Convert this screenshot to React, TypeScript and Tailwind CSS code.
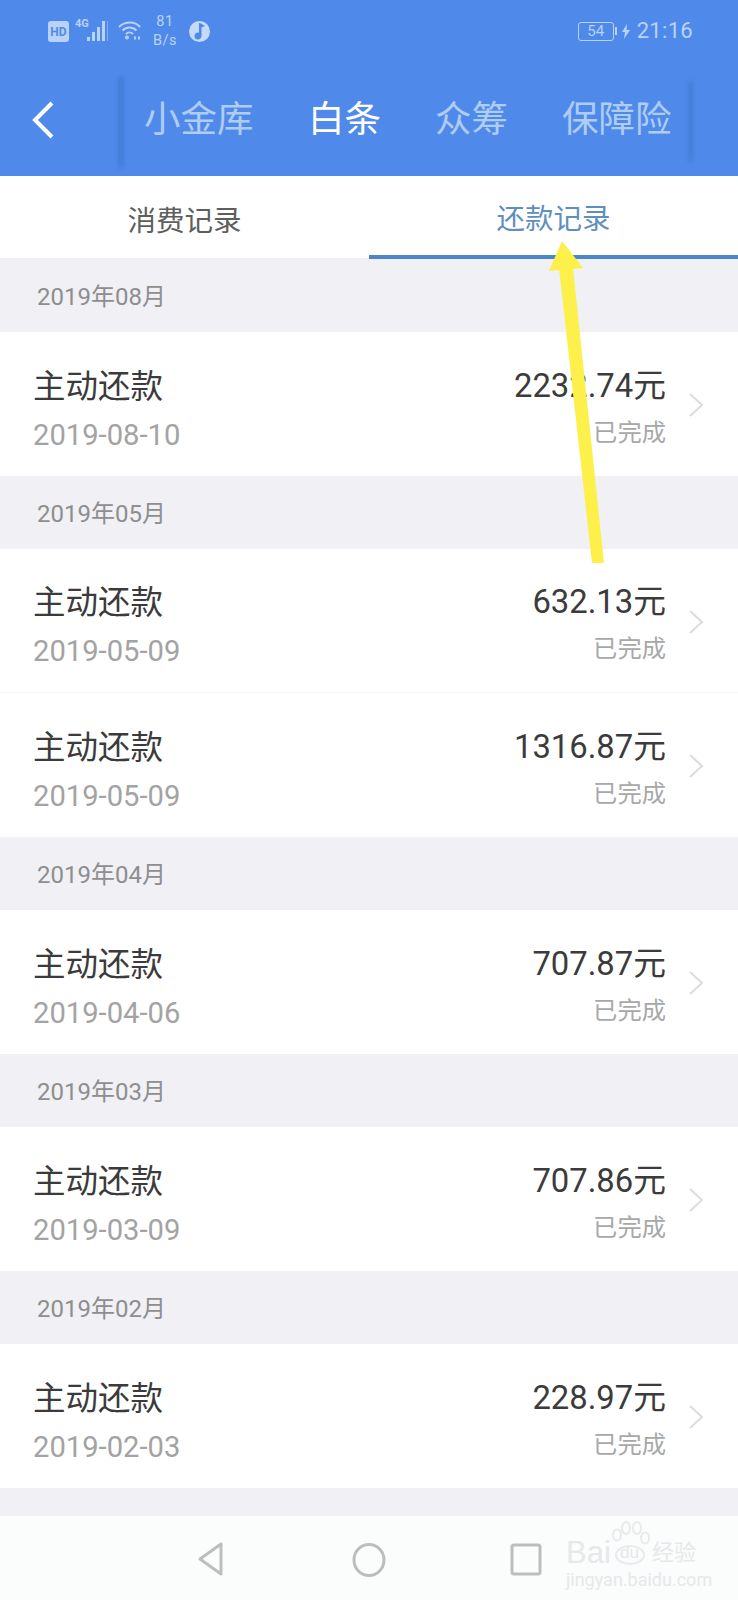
const font = { fontFamily: '"Roboto","Noto Sans CJK SC",sans-serif' };

function Row({ date, amount, divider }: { date: string; amount: string; divider?: boolean }) {
  return (
    <div className={divider ? "h-[144px] bg-white flex items-center pl-[33px] pr-[34px] border-b border-[#f7f7f7]" : "h-[144px] bg-white flex items-center pl-[33px] pr-[34px]"}>
      <div className="flex-1 flex flex-col">
        <div className="text-[32.5px] leading-[40px] text-[#3b3b3b] mt-[11px]">主动还款</div>
        <div className="text-[29.2px] leading-[36px] text-[#a3a3a3] mt-[10px]">{date}</div>
      </div>
      <div className="flex flex-col items-end mr-[22px]">
        <div className="text-[32.8px] leading-[40px] text-[#3b3b3b] mt-[5px]">{amount}元</div>
        <div className="text-[24.3px] leading-[30px] text-[#a8a8a8] mt-[12px]">已完成</div>
      </div>
      <svg width="16" height="26" viewBox="0 0 16 26" fill="none" stroke="#dcdcdc" strokeWidth="2" className="mt-[2px]"><path d="M2 2l12 11L2 24" /></svg>
    </div>
  );
}

function Band({ label }: { label: string }) {
  return <div className="h-[73px] bg-[#f0f0f5] flex items-center pl-[37px] pt-[2px] text-[24px] text-[#8e8e8e]">{label}</div>;
}

export default function App() {
  return (
    <div className="relative w-[738px] h-[1600px] overflow-hidden bg-white" style={font}>
      <div className="h-[176px] bg-[#4f8aeb] flex flex-col">
        <div className="h-[64px] flex items-center pl-[48px] pr-[45px] pb-[2px] text-[#b9d2f7]">
          <svg width="21" height="21" viewBox="0 0 21 21"><rect width="21" height="21" rx="3" fill="#b9d2f7" /><text x="10.500" y="15" textAnchor="middle" fontSize="12" fontWeight="700" fill="#4f8aeb">HD</text></svg>
          <svg width="34" height="28" viewBox="0 0 34 28" className="ml-[6px]" fill="#b9d2f7">
            <text x="0" y="10" fontSize="11" fontWeight="700">4G</text>
            <rect x="12" y="20" width="3" height="4" /><rect x="17" y="15" width="3" height="9" /><rect x="22" y="10" width="3" height="14" /><rect x="27" y="4" width="3" height="20" /><rect x="32" y="4" width="1" height="20" opacity=".5" />
          </svg>
          <svg width="24" height="20" viewBox="0 0 24 20" className="ml-[9px]" fill="none" stroke="#b9d2f7" strokeWidth="2"><path d="M1 6c6-6 16-6 21 0M4.500 9.500c4-4 10-4 14 0M8 13c2-2 5-2 7 0" /><circle cx="9" cy="16.500" r="2" fill="#b9d2f7" stroke="none" /><path d="M16 17h2M20 17h2" strokeWidth="3" /></svg>
          <div className="ml-[11px] w-[24px] text-center text-[14.5px] leading-[19px] tracking-[0.5px]"><div>81</div><div>B/s</div></div>
          <svg width="21" height="21" viewBox="0 0 21 21" className="ml-[12px]"><circle cx="10.500" cy="10.500" r="10.500" fill="#c5d9f8" /><path d="M11 2l5 3-3.500 1.500V15a3.500 3.500 0 1 1-2.500-3.300V2z" fill="#4f8aeb" /></svg>
          <div className="ml-auto flex items-center">
            <div className="w-[36px] h-[19px] border border-[#b9d2f7] rounded-[3px] flex items-center justify-center text-[15px] leading-none">54</div>
            <div className="w-[2px] h-[8px] bg-[#b9d2f7] ml-[1px]" />
            <svg width="10" height="15" viewBox="0 0 10 15" className="ml-[4px]" fill="#b9d2f7"><path d="M6 0L1 8h3l-1 7 6-9H5.500z" /></svg>
            <div className="ml-[6px] text-[22px] leading-none tracking-[0.3px]">21:16</div>
          </div>
        </div>
        <div className="relative flex-1 flex items-center pl-[32px]">
          <svg width="22" height="38" viewBox="0 0 22 38" fill="none" stroke="#ffffff" strokeWidth="4" className="mt-[-1px]"><path d="M20 2L3 19l17 17" /></svg>
          <div className="absolute left-[118px] top-[12px] w-[6px] h-[92px] bg-[#3f74c8] opacity-60 blur-[2px]" />
          <div className="absolute left-[688px] top-[17px] w-[5px] h-[80px] bg-[#3f74c8] opacity-60 blur-[2px]" />
          <div className="ml-[90px] mt-[1px] flex items-center text-[36.5px] leading-none text-[#afcdf3]">
            <span className="w-[109.5px]">小金库</span>
            <span className="ml-[54.5px] w-[73px] text-white">白条</span>
            <span className="ml-[54px] w-[73px]">众筹</span>
            <span className="ml-[54px] w-[109.5px]">保障险</span>
          </div>
        </div>
      </div>

      <div className="h-[83px] flex bg-white text-[28.5px]">
        <div className="w-[369px] flex items-center justify-center text-[#5e5e5e] pt-[10px] border-b-[1px] border-[#f0f0f5]">消费记录</div>
        <div className="w-[369px] flex items-center justify-center text-[#5f8fbd] pt-[10px] border-b-[4px] border-[#4a86c9]">还款记录</div>
      </div>

      <Band label="2019年08月" />
      <Row date="2019-08-10" amount="2232.74" />
      <Band label="2019年05月" />
      <Row date="2019-05-09" amount="632.13" divider />
      <Row date="2019-05-09" amount="1316.87" />
      <Band label="2019年04月" />
      <Row date="2019-04-06" amount="707.87" />
      <Band label="2019年03月" />
      <Row date="2019-03-09" amount="707.86" />
      <Band label="2019年02月" />
      <Row date="2019-02-03" amount="228.97" />
      <div className="h-[28px] bg-[#f0f0f5]" />

      <div className="relative h-[84px] bg-[#fbfcfc]">
        <svg width="30" height="36" viewBox="0 0 30 36" fill="none" stroke="#bdbdbd" strokeWidth="3" strokeLinejoin="round" className="absolute left-[197px] top-[25px]"><path d="M24 3v30L3 18z" /></svg>
        <svg width="36" height="36" viewBox="0 0 36 36" fill="none" stroke="#bdbdbd" strokeWidth="3" className="absolute left-[351px] top-[26px]"><ellipse cx="18" cy="18" rx="15" ry="15.500" /></svg>
        <svg width="32" height="34" viewBox="0 0 32 34" fill="none" stroke="#bdbdbd" strokeWidth="3" className="absolute left-[510px] top-[27px]"><rect x="2" y="2" width="28" height="29" rx="2" /></svg>
        <svg width="44" height="48" viewBox="0 0 44 48" fill="none" stroke="#e8eaec" strokeWidth="2" className="absolute left-[610px] top-[4px]">
          <ellipse cx="7" cy="15" rx="4" ry="5.500" /><ellipse cx="16" cy="8" rx="4" ry="6" /><ellipse cx="27" cy="8" rx="4" ry="6" /><ellipse cx="35" cy="18" rx="4" ry="5.500" /><ellipse cx="20" cy="35" rx="14" ry="9" />
        </svg>
        <div className="absolute left-[566px] top-[22px] w-[134px] text-[#e6e8ea]">
          <div className="relative h-[30px] text-[31px] leading-[30px]" style={{ fontFamily: '"Liberation Sans","Noto Sans CJK SC",sans-serif' }}>
            <span className="absolute left-0 top-0">Bai</span>
            <span className="absolute left-[54px] top-[5px] text-[17px] leading-[20px]">du</span>
            <span className="absolute left-[86px] top-[1px] text-[22px] leading-[28px]">经验</span>
          </div>
          <div className="text-[18px] leading-[18px] mt-[3px] text-center whitespace-nowrap">jingyan.baidu.com</div>
        </div>
      </div>

      <svg width="738" height="1600" viewBox="0 0 738 1600" className="absolute left-0 top-0 pointer-events-none">
        <path d="M562 241L583 268 549 271z" fill="#fdf04a" />
        <path d="M559 268L573 268 604 563 592 563z" fill="#fdf04a" />
      </svg>
    </div>
  );
}
